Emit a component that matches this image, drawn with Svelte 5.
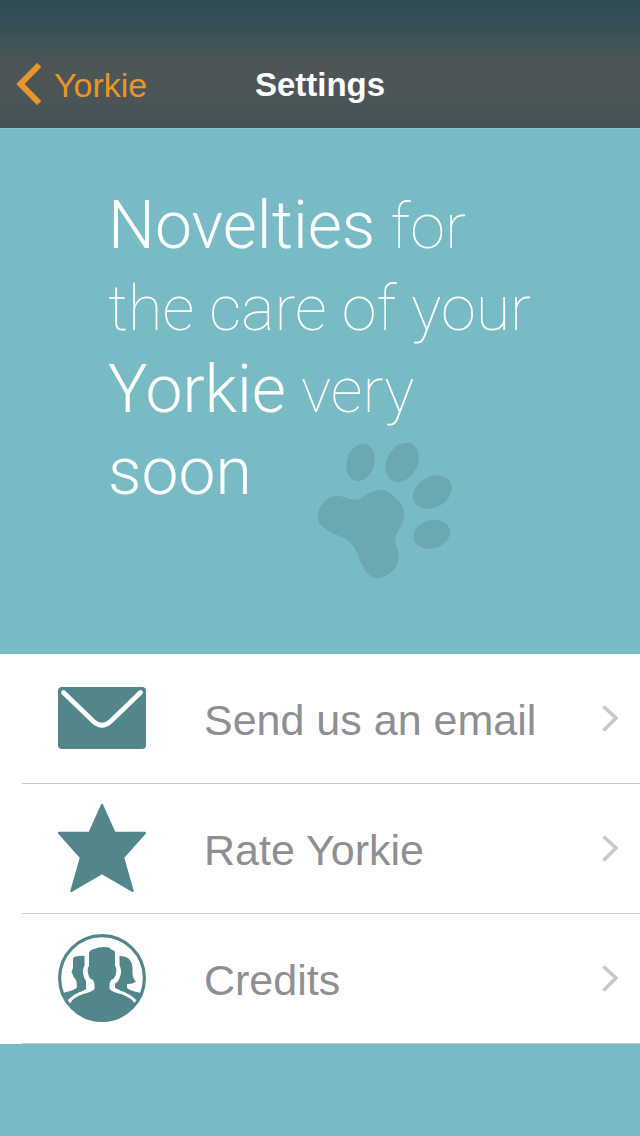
<script>
  const rows = [
    { icon: 'mail', label: 'Send us an email' },
    { icon: 'star', label: 'Rate Yorkie' },
    { icon: 'people', label: 'Credits' }
  ];
</script>

<div class="screen">
  <header>
    <button class="back" type="button">
      <svg width="26" height="42" viewBox="0 0 26 42" aria-hidden="true">
        <path d="M23.2 2 4.500 21 23.2 40" fill="none" stroke="currentColor" stroke-width="6" />
      </svg>
      <span>Yorkie</span>
    </button>
    <h1>Settings</h1>
  </header>

  <main>
    <section class="hero">
      <p><b>Novelties</b> for<br />the care of your<br /><b>Yorkie</b> very<br /><b>soon</b></p>
      <svg class="paw" width="134" height="136" viewBox="54 36 402 408" aria-hidden="true">
        <ellipse cx="181.500" cy="97.500" rx="41" ry="57" transform="rotate(17 181.500 97.500)" />
        <ellipse cx="306.500" cy="97" rx="46" ry="62" transform="rotate(28 306.500 97)" />
        <ellipse cx="397" cy="186.500" rx="62" ry="46" transform="rotate(-30 397 186.500)" />
        <ellipse cx="395" cy="313" rx="56" ry="42" transform="rotate(-16 395 313)" />
        <path d="M54 262C54 226 80 198 112 198C140 198 148 210 166 210C190 208 205 181 242 180C262 180 277 193 292 210C304 222 313 232 313 252C313 284 285 310 285 332C287 348 296 360 296 382C295 418 262 443 230 444C206 444 194 420 183 397C173 374 167 352 149 336C130 320 96 312 74 295C61 286 54 278 54 262Z" />
      </svg>
    </section>

    <ul>
      {#each rows as row}
        <li>
          <button class="row" type="button">
            <svg class="icon" width="88" height="88" viewBox="0 0 88 88" aria-hidden="true">
              {#if row.icon === 'mail'}
                <rect y="13" width="88" height="62" rx="4" fill="currentColor" />
                <path d="M5.500 18.500 35.500 47.500Q44 55 52.500 47.500L82.500 18.500" fill="none" stroke="#fff" stroke-width="4.800" stroke-linecap="round" />
              {:else if row.icon === 'star'}
                <path d="M44 1.200 56.500 29H86.800L65 53.500 74.500 86.800 44 69 13.500 86.800 23 53.500 1.200 29H31.500Z" fill="currentColor" stroke="currentColor" stroke-width="2.400" stroke-linejoin="round" />
              {:else}
                <path d="M15 25Q15 23 18 22.500Q22 21.500 28 22V56H36L12 70 5 59Q17 56 19 53.500Q19 49 18 46Q15 43 15 41L13.500 38 15 34Z" fill="currentColor" />
                <path d="M60 22Q67 21.500 71 25Q75 29 74.500 37Q74 44 78 47.500Q74 50.500 69 50L69 54Q71 56.500 83 59L76 70 52 57H57V40Z" fill="currentColor" />
                <path d="M12 67.500Q17 62 26 59Q32 57 34 54Q34.500 50 33 48Q29 46 28 41Q26.500 36 29 32V17M76 67.500Q71 62 62 59Q56 57 54 54Q53.500 50 55 48Q59 46 60 41Q61.500 36 59 32V17" fill="none" stroke="#fff" stroke-width="5" stroke-linecap="round" />
                <path d="M31 19Q32 15.500 36 15Q43 12 51 13.500L54 16Q57 16 57 19V32Q59 34 58 39Q57 45 53 46L51.500 50V55Q54 58 63 60Q74 64 77 70Q63 88 44 87Q24 87 12 70Q14 64 25 60Q34 58 36.500 55V50L35 46Q31 45 30 39Q29 34 31 32Z" fill="currentColor" />
                <circle cx="44" cy="44" r="42.400" fill="none" stroke="currentColor" stroke-width="3.200" />
              {/if}
            </svg>
            <span>{row.label}</span>
            <svg width="16" height="28" viewBox="0 -2 16 28" aria-hidden="true">
              <path d="M1.500 .500 14 12 1.500 24.500" fill="none" stroke="#c7c7cc" stroke-width="3.600" />
            </svg>
          </button>
        </li>
      {/each}
    </ul>
  </main>
</div>

<style>
  :global(body) {
    margin: 0;
    background: #78bbc5;
  }

  .screen {
    font-family: 'Liberation Sans', Arial, sans-serif;
    color: #fff;
  }

  header {
    display: grid;
    grid-template-columns: 1fr auto 1fr;
    align-items: center;
    height: 88px;
    padding: 40px 16px 0;
    background: linear-gradient(#304b54, #364e54 18%, #43545a 38%, #4a5355 42%, #4d5557 56%, #4a5557 80%, #44525a);
    border-bottom: 1px solid #83c4cd;
    margin-bottom: -1px;
  }

  .back {
    display: flex;
    align-items: center;
    gap: 12px;
    padding: 0;
    border: 0;
    background: none;
    color: #e79725;
    font: inherit;
    font-size: 34px;
    justify-self: start;
  }

  h1 {
    margin: 0;
    font-size: 33px;
    font-weight: 700;
  }

  .back span,
  h1 {
    padding-top: 2px;
  }

  .hero {
    display: flex;
    flex-direction: column;
    align-items: flex-start;
    padding: 58px 80px 76px 108px;
  }

  .hero p {
    margin: 0;
    font-family: Roboto, sans-serif;
    font-size: 63px;
    line-height: 82px;
    font-weight: 100;
    white-space: nowrap;
  }

  .hero b {
    font-size: 66px;
    line-height: 1;
    font-weight: 300;
  }

  .paw {
    margin: -72px 0 0 210px;
    fill: #6ba8b1;
  }

  ul {
    margin: 0;
    padding: 0;
    list-style: none;
    background: #fff;
  }

  .row {
    display: flex;
    align-items: center;
    width: 100%;
    height: 130px;
    padding: 0 22px 2px 58px;
    border: 0;
    background: linear-gradient(#c8c7cc, #c8c7cc) 22px 100% / 100% 1px no-repeat;
    color: #8e8e93;
    font: inherit;
    font-size: 43px;
    text-align: left;
  }

  .row span {
    flex: 1;
    padding: 4px 0 0 58px;
  }

  .icon {
    color: #52868a;
  }
</style>
